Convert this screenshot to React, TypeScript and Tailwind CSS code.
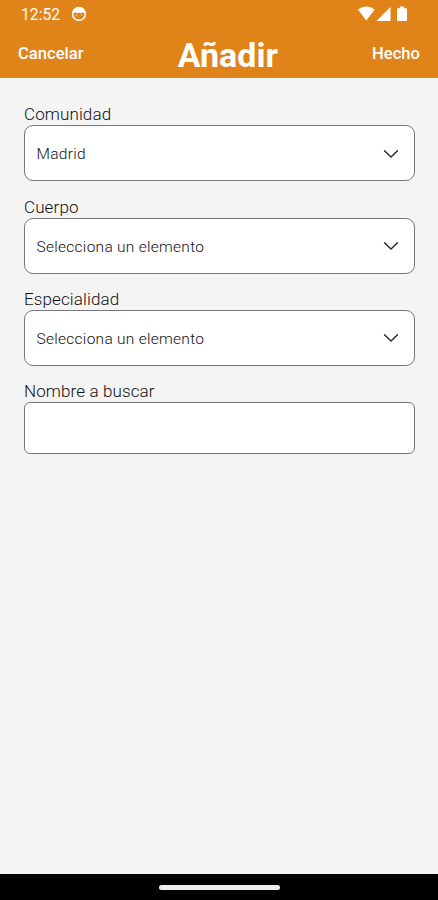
import React from "react";

function Chevron() {
  return (
    <svg className="mt-px" width="16" height="10" viewBox="0 0 16 10" fill="none" stroke="#222" strokeWidth="1.4" strokeLinecap="round" strokeLinejoin="round">
      <path d="M1.5 1.7 8 7.9 14.5 1.7" />
    </svg>
  );
}

function SelectField({ label, value }: { label: string; value: string }) {
  return (
    <div className="flex h-[92.15px] flex-col">
      <label className="h-[21px] text-[17px] font-light leading-[21px] tracking-[0.12px] text-[#111]">{label}</label>
      <button className="flex h-14 items-center justify-between rounded-[9px] border border-[#777] bg-white pl-[11.5px] pr-[15px] text-[15.5px] font-light tracking-[0.28px] text-[#111]">
        <span className="pt-[3.4px]">{value}</span>
        <Chevron />
      </button>
    </div>
  );
}

export default function App() {
  return (
    <div className="flex h-[900px] w-[438px] flex-col overflow-hidden bg-[#f4f4f4] font-['Roboto',sans-serif]">
      <header className="h-[78px] bg-[#e0841a] text-white">
        <div className="flex h-7 items-center justify-between pl-[21px] pr-[30px]">
          <div className="flex items-center gap-[11px]">
            <span className="pt-[2px] text-[15.7px] leading-[26px]">12:52</span>
            <svg width="16" height="16" viewBox="0 0 16 16">
              <circle cx="8" cy="8" r="6.4" fill="none" stroke="#fff" strokeWidth="1.6" />
              <path d="M1.2 7.2C1.6 3.3 4.5 1.2 8 1.2s6.4 2.1 6.8 6L11.6 6.4 10 7.3 8 6.4 6 7.3 4.4 6.4Z" fill="#fff" />
              <path d="M5 9h1M10 9h1" stroke="#fff" strokeWidth="1" />
            </svg>
          </div>
          <svg width="50" height="16" viewBox="0 0 50 16" fill="#fff">
            <path d="M0 3.5Q8.3-2.7 16.7 3.5L8.3 14.5Z" />
            <path d="M18.5 15 32.5 1v14Z" />
            <path d="M40 2.3h1.8V.5h4.4v1.8H48q1 0 1 1V14q0 1-1 1h-8q-1 0-1-1V3.3q0-1 1-1Z" />
          </svg>
        </div>
        <div className="flex h-[50px] items-center justify-between px-[18px]">
          <button className="pt-[2px] text-[16.6px] font-medium leading-6">Cancelar</button>
          <h1 className="pt-[3px] text-[34px] font-bold leading-10">Añadir</h1>
          <button className="pt-[2px] text-[16.6px] font-medium leading-6">Hecho</button>
        </div>
      </header>
      <main className="flex-1 pl-6 pr-[23px] pt-[26.4px]">
        <SelectField label="Comunidad" value="Madrid" />
        <SelectField label="Cuerpo" value="Selecciona un elemento" />
        <SelectField label="Especialidad" value="Selecciona un elemento" />
        <div className="flex flex-col">
          <label htmlFor="nombre" className="h-[21px] text-[17px] font-light leading-[21px] tracking-[0.12px] text-[#111]">Nombre a buscar</label>
          <input id="nombre" className="h-[52px] rounded-[6px] border border-[#777] bg-white px-3 outline-none" />
        </div>
      </main>
      <footer className="flex h-[26px] items-center justify-center bg-black">
        <div className="h-[5px] w-[121px] rounded-full bg-[#eee]" />
      </footer>
    </div>
  );
}
